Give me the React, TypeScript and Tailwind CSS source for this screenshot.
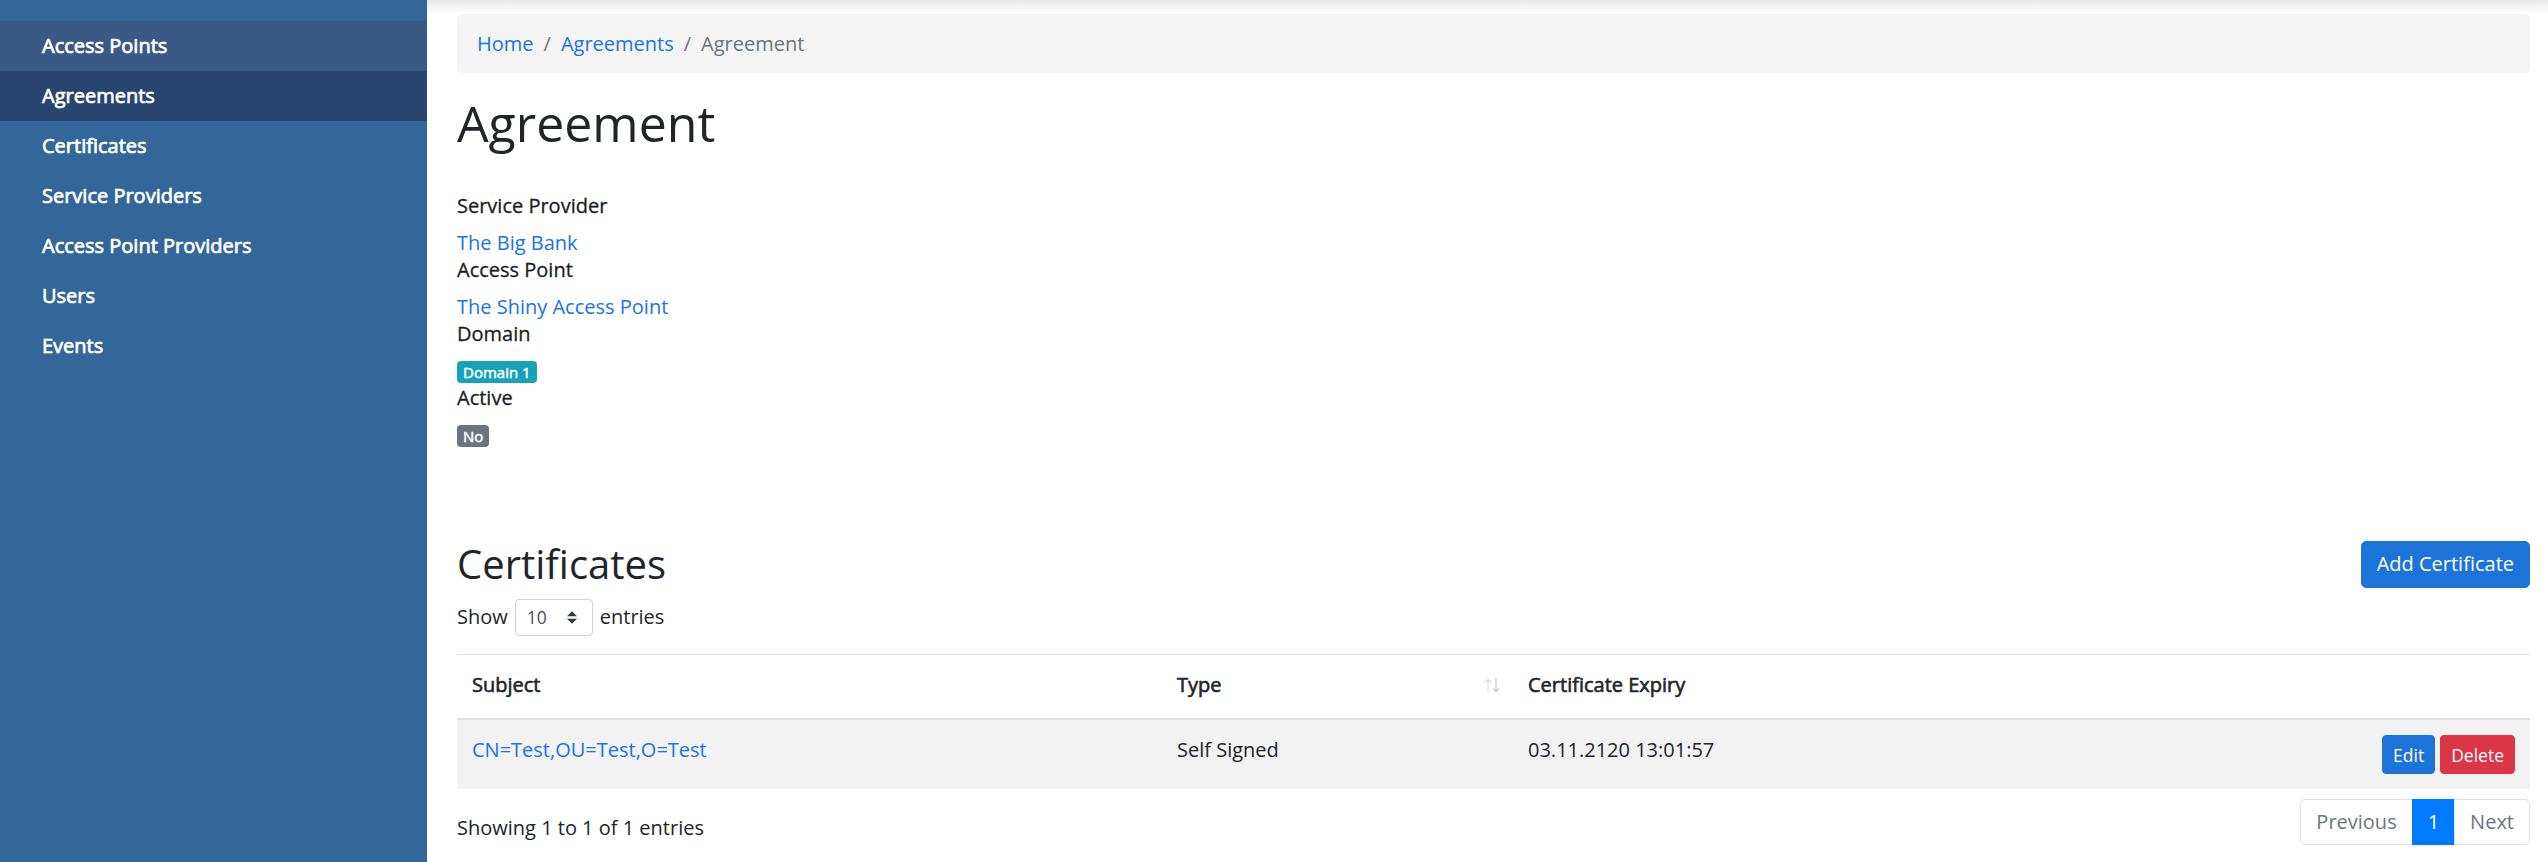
import React from "react";

const navItems = [
  { label: "Access Points", state: "hover" },
  { label: "Agreements", state: "active" },
  { label: "Certificates", state: "" },
  { label: "Service Providers", state: "" },
  { label: "Access Point Providers", state: "" },
  { label: "Users", state: "" },
  { label: "Events", state: "" },
];

function SortIcon() {
  return (
    <svg width="17" height="17" viewBox="0 0 17 17" className="shrink-0">
      <g fill="none" strokeWidth="1.1">
        <path d="M4 2.5V16M1 5.5L4 2.5L7 5.5" stroke="#dcdcdc" />
        <path d="M12 1V14.5M9 11.5L12 14.5L15 11.5" stroke="#c4c4c4" />
      </g>
    </svg>
  );
}

function SelectArrows() {
  return (
    <svg width="10" height="13" viewBox="0 0 4 5" className="shrink-0">
      <path d="M2 0L0 2h4zm0 5L0 3h4z" fill="#343a40" />
    </svg>
  );
}

function Label({ children }: { children: React.ReactNode }) {
  return (
    <div className="mb-[10px] leading-[30px] text-[#1b1e21] [-webkit-text-stroke:0.3px_currentColor]">
      {children}
    </div>
  );
}

export default function App() {
  return (
    <div className="flex min-h-[862px] bg-white font-['Open_Sans',sans-serif] text-[20px] leading-[30px] text-[#212529]">
      <aside className="w-[427px] shrink-0 bg-[#336699] pt-[21px]">
        {navItems.map((it) => (
          <div
            key={it.label}
            className={
              "h-[50px] py-[10px] pl-[42px] text-white [-webkit-text-stroke:0.7px_currentColor] " +
              (it.state === "active"
                ? "bg-[#2a4470]"
                : it.state === "hover"
                ? "bg-[#3a5a86]"
                : "")
            }
          >
            {it.label}
          </div>
        ))}
      </aside>

      <main className="min-w-0 flex-1">
        <div className="h-[14px] bg-linear-to-b from-[#e8e8e8] to-white" />
        <div className="pl-[30px] pr-[18px]">
          <nav className="flex h-[59px] items-center rounded-[5px] bg-[#f4f4f4] px-[20px]">
            <a className="text-[#1a73e8]">Home</a>
            <span className="px-[10px] text-[#6c757d]">/</span>
            <a className="text-[#1a73e8]">Agreements</a>
            <span className="px-[10px] text-[#6c757d]">/</span>
            <span className="text-[#6c757d]">Agreement</span>
          </nav>

          <h1 className="mt-[20px] mb-[10px] text-[50px] leading-[60px] font-normal">Agreement</h1>

          <div className="mt-[38px]">
            <Label>Service Provider</Label>
            <div className="h-[24px] leading-[24px]">
              <a className="text-[#1a73e8]">The Big Bank</a>
            </div>
            <Label>Access Point</Label>
            <div className="h-[24px] leading-[24px]">
              <a className="text-[#1a73e8]">The Shiny Access Point</a>
            </div>
            <Label>Domain</Label>
            <div className="flex h-[24px] items-end">
              <span className="rounded-[4px] bg-[#17a2b8] px-[6px] py-[3.5px] text-[15px] leading-[15px] text-white [-webkit-text-stroke:0.5px_currentColor]">
                Domain 1
              </span>
            </div>
            <Label>Active</Label>
            <div className="flex h-[24px] items-end">
              <span className="rounded-[4px] bg-[#6c757d] px-[6px] py-[3.5px] text-[15px] leading-[15px] text-white [-webkit-text-stroke:0.5px_currentColor]">
                No
              </span>
            </div>
          </div>

          <section className="mt-[93px]">
            <div className="flex items-center justify-between">
              <h2 className="text-[40px] leading-[48px] font-normal">Certificates</h2>
              <button className="rounded-[5px] border border-[#1c74d9] bg-[#1c74d9] px-[15px] py-[7.5px] text-[20px] leading-[30px] text-white">
                Add Certificate
              </button>
            </div>

            <div className="mt-[10px] flex h-[38px] items-center">
              <span>Show</span>
              <div className="mx-[7px] flex h-[37px] w-[78px] items-center justify-between rounded-[4px] border border-[#ced4da] bg-white pl-[11px] pr-[15px] text-[17.5px] text-[#495057]">
                <span>10</span>
                <SelectArrows />
              </div>
              <span>entries</span>
            </div>

            <table className="mt-[18px] w-full table-fixed border-collapse">
              <colgroup>
                <col className="w-[705px]" />
                <col className="w-[351px]" />
                <col className="w-[817px]" />
                <col />
              </colgroup>
              <thead>
                <tr>
                  <th className="border-t border-b-2 border-[#dee2e6] px-[15px] pt-[15px] pb-[18px] text-left font-normal [-webkit-text-stroke:0.6px_currentColor]">
                    Subject
                  </th>
                  <th className="border-t border-b-2 border-[#dee2e6] pt-[15px] pb-[18px] pl-[15px] pr-[12px] text-left font-normal">
                    <div className="flex items-center justify-between">
                      <span className="[-webkit-text-stroke:0.6px_currentColor]">Type</span>
                      <SortIcon />
                    </div>
                  </th>
                  <th className="border-t border-b-2 border-[#dee2e6] px-[15px] pt-[15px] pb-[18px] text-left font-normal [-webkit-text-stroke:0.6px_currentColor]">
                    Certificate Expiry
                  </th>
                  <th className="border-t border-b-2 border-[#dee2e6] px-[15px] pt-[15px] pb-[18px]" />
                </tr>
              </thead>
              <tbody>
                <tr className="bg-[#f2f2f2]">
                  <td className="border-t border-[#dee2e6] px-[15px] py-[15px] align-top">
                    <a className="text-[#1a73e8]">CN=Test,OU=Test,O=Test</a>
                  </td>
                  <td className="border-t border-[#dee2e6] px-[15px] py-[15px] align-top">Self Signed</td>
                  <td className="border-t border-[#dee2e6] px-[15px] py-[15px] align-top">03.11.2120 13:01:57</td>
                  <td className="border-t border-[#dee2e6] px-[15px] py-[15px] align-top">
                    <div className="flex justify-end gap-[5px]">
                      <button className="h-[39px] rounded-[4px] border border-[#1c74d9] bg-[#1c74d9] px-[10px] text-[17.5px] leading-[26px] text-white">
                        Edit
                      </button>
                      <button className="h-[39px] rounded-[4px] border border-[#dc3545] bg-[#dc3545] px-[10px] text-[17.5px] leading-[26px] text-white">
                        Delete
                      </button>
                    </div>
                  </td>
                </tr>
              </tbody>
            </table>

            <div className="mt-[10px] flex items-start justify-between">
              <div className="pt-[14px]">Showing 1 to 1 of 1 entries</div>
              <div className="flex">
                <span className="rounded-l-[5px] border border-[#dee2e6] bg-white px-[15px] py-[10px] leading-[24px] text-[#6c757d]">
                  Previous
                </span>
                <span className="-ml-px border border-[#007bff] bg-[#007bff] px-[15px] py-[10px] leading-[24px] text-white">
                  1
                </span>
                <span className="-ml-px rounded-r-[5px] border border-[#dee2e6] bg-white px-[15px] py-[10px] leading-[24px] text-[#6c757d]">
                  Next
                </span>
              </div>
            </div>
          </section>
        </div>
      </main>
    </div>
  );
}
